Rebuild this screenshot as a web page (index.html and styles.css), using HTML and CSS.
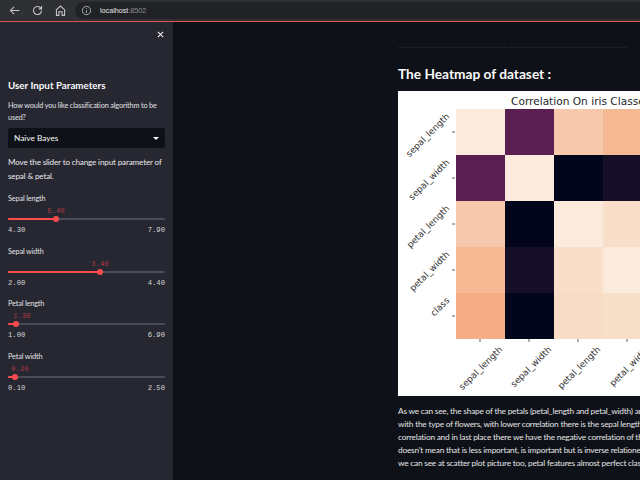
FILE: index.html
```html
<!DOCTYPE html>
<html lang="en">
<head>
    <meta charset="UTF-8">
    <meta name="viewport" content="width=device-width, initial-scale=1.0">
    <title>Iris Classification</title>
    <link rel="stylesheet" href="styles.css">
</head>
<body>

<!-- Browser toolbar -->
<header class="toolbar">
    <svg class="tool-icon" viewBox="0 0 16 16"><path d="M14 8H3M7.5 3.5 3 8l4.5 4.5"/></svg>
    <svg class="tool-icon" viewBox="0 0 16 16"><path d="M13 8a5 5 0 1 1-1.5-3.6L13 6M13 2.5V6H9.5"/></svg>
    <svg class="tool-icon" viewBox="0 0 16 16"><path d="M3 14V7l5-4.500L13 7v7h-3V9.500H6V14z"/></svg>
    <div class="address">
        <svg class="info-icon" viewBox="0 0 16 16"><circle cx="8" cy="8" r="6"/><path d="M8 7.500V11.500M8 4.500v1.200"/></svg>
        <span class="host">localhost</span><span class="port">:8502</span>
    </div>
</header>

<div class="app">
    <!-- Sidebar -->
    <aside class="sidebar">
        <div class="close-row">
            <svg class="close-icon" viewBox="0 0 8 8"><path d="M1 1l6 6M7 1 1 7"/></svg>
        </div>
        <h2 class="side-title">User Input Parameters</h2>
        <p class="side-label side-question">How would you like classification algorithm to be used?</p>
        <div class="select">
            <span>Naive Bayes</span>
            <span class="caret"></span>
        </div>
        <p class="side-text">Move the slider to change input parameter of sepal &amp; petal.</p>

        <div class="slider">
            <div class="side-label">Sepal length</div>
            <div class="track-wrap">
                <span class="value" style="left: 48px">5.40</span>
                <div class="track"><div class="fill" style="width: 48px"><span class="thumb"></span></div></div>
            </div>
            <div class="range"><span>4.30</span><span>7.90</span></div>
        </div>
        <div class="slider">
            <div class="side-label">Sepal width</div>
            <div class="track-wrap">
                <span class="value" style="left: 92px">3.40</span>
                <div class="track"><div class="fill" style="width: 92px"><span class="thumb"></span></div></div>
            </div>
            <div class="range"><span>2.00</span><span>4.40</span></div>
        </div>
        <div class="slider">
            <div class="side-label">Petal length</div>
            <div class="track-wrap">
                <span class="value" style="left: 14px">1.30</span>
                <div class="track"><div class="fill" style="width: 8px"><span class="thumb"></span></div></div>
            </div>
            <div class="range"><span>1.00</span><span>6.90</span></div>
        </div>
        <div class="slider">
            <div class="side-label">Petal width</div>
            <div class="track-wrap">
                <span class="value" style="left: 12px">0.20</span>
                <div class="track"><div class="fill" style="width: 7px"><span class="thumb"></span></div></div>
            </div>
            <div class="range"><span>0.10</span><span>2.50</span></div>
        </div>
    </aside>

    <!-- Main content -->
    <main class="main">
        <div class="table-edge">
            <span class="col col-a"></span><span class="col col-b"></span><span class="col col-c"></span><span class="col col-c"></span><span class="col col-e"></span><span class="col col-d"></span>
        </div>
        <h2 class="heading">The Heatmap of dataset :</h2>
        <figure class="plot">
            <svg class="heatmap" width="242" height="305" viewBox="0 0 242 305">
                <text class="plot-title" x="113" y="14">Correlation On iris Classes</text>

                <rect x="58" y="18" width="49" height="46" fill="#faebdd"/>
                <rect x="107" y="18" width="49" height="46" fill="#5a1f50"/>
                <rect x="156" y="18" width="49" height="46" fill="#f6c9ac"/>
                <rect x="205" y="18" width="49" height="46" fill="#f5b994"/>

                <rect x="58" y="64" width="49" height="46" fill="#5a1f50"/>
                <rect x="107" y="64" width="49" height="46" fill="#faebdd"/>
                <rect x="156" y="64" width="49" height="46" fill="#03051a"/>
                <rect x="205" y="64" width="49" height="46" fill="#160f28"/>

                <rect x="58" y="110" width="49" height="46" fill="#f6c9ac"/>
                <rect x="107" y="110" width="49" height="46" fill="#03051a"/>
                <rect x="156" y="110" width="49" height="46" fill="#faebdd"/>
                <rect x="205" y="110" width="49" height="46" fill="#f9dfc9"/>

                <rect x="58" y="156" width="49" height="46" fill="#f5b994"/>
                <rect x="107" y="156" width="49" height="46" fill="#160f28"/>
                <rect x="156" y="156" width="49" height="46" fill="#f9dfc9"/>
                <rect x="205" y="156" width="49" height="46" fill="#faebdd"/>

                <rect x="58" y="202" width="49" height="46" fill="#f4ad85"/>
                <rect x="107" y="202" width="49" height="46" fill="#03051a"/>
                <rect x="156" y="202" width="49" height="46" fill="#f8dcc5"/>
                <rect x="205" y="202" width="49" height="46" fill="#f8dfca"/>

                <g class="ticks">
                    <path d="M54 41h3M54 87h3M54 133h3M54 179h3M54 225h3"/>
                    <path d="M82 248v3M131 248v3M180 248v3M229 248v3"/>
                </g>

                <g class="tick-label">
                    <text transform="translate(52 26) rotate(-45)">sepal_length</text>
                    <text transform="translate(52 72) rotate(-45)">sepal_width</text>
                    <text transform="translate(52 118) rotate(-45)">petal_length</text>
                    <text transform="translate(52 164) rotate(-45)">petal_width</text>
                    <text transform="translate(52 210) rotate(-45)">class</text>
                    <text transform="translate(105 259) rotate(-45)">sepal_length</text>
                    <text transform="translate(154 259) rotate(-45)">sepal_width</text>
                    <text transform="translate(203 259) rotate(-45)">petal_length</text>
                    <text transform="translate(252 259) rotate(-45)">petal_width</text>
                </g>
            </svg>
        </figure>
        <div class="notes">
            <p>As we can see, the shape of the petals (petal_length and petal_width) are the most correlated</p>
            <p>with the type of flowers, with lower correlation there is the sepal length with a good</p>
            <p>correlation and in last place there we have the negative correlation of the sepal width, this</p>
            <p>doesn't mean that is less important, is important but is inverse relationed with the class, as</p>
            <p>we can see at scatter plot picture too, petal features almost perfect classify the flowers</p>
        </div>
    </main>
</div>

</body>
</html>
```

FILE: styles.css
```css
* {
    box-sizing: border-box;
}
html, body {
    height: 100%;
}
body {
    margin: 0;
    display: flex;
    flex-direction: column;
    overflow: hidden;
    font-family: "Lato", "Open Sans", sans-serif;
    background-color: #0e1117;
    color: #fafafa;
}

/* browser bar */
.toolbar {
    height: 22px;
    flex: none;
    display: flex;
    align-items: center;
    gap: 10px;
    padding: 0 0 0 8px;
    background-color: #2f3033;
    border-bottom: 1px solid #d9574c;
}
.tool-icon {
    width: 13px;
    height: 13px;
    fill: none;
    stroke: #c4c5c7;
    stroke-width: 1.300;
}
.address {
    flex: 1;
    height: 17px;
    margin-left: -2px;
    display: flex;
    align-items: center;
    padding-left: 6px;
    border-radius: 9px 0 0 9px;
    background-color: #212225;
    font-size: 7.200px;
    font-family: "Liberation Sans", sans-serif;
}
.info-icon {
    width: 11px;
    height: 11px;
    margin-right: 8px;
    fill: none;
    stroke: #c4c5c7;
    stroke-width: 1.200;
}
.host {
    color: #e6e6e6;
}
.port {
    color: #8e9094;
}

/* sidebar */
.app {
    flex: 1;
    display: flex;
    min-height: 0;
}
.sidebar {
    width: 173px;
    flex: none;
    padding: 0 8px;
    background-color: #262730;
}
.close-row {
    height: 57px;
    padding-top: 9px;
    display: flex;
    justify-content: flex-end;
}
.close-icon {
    width: 7px;
    height: 7px;
    margin-right: 1px;
    fill: none;
    stroke: #f0f0f0;
    stroke-width: 1.200;
}
.side-title {
    margin: 0 0 9px;
    font-size: 9.800px;
    line-height: 13px;
    font-weight: 700;
}
.side-label {
    margin: 0;
    font-size: 7.300px;
    line-height: 11px;
    letter-spacing: -0.150px;
    color: #e2e2e6;
}
.side-question {
    line-height: 12px;
    margin-top: -1px;
}
.select {
    height: 20px;
    margin-top: 4px;
    padding: 0 6px;
    display: flex;
    align-items: center;
    justify-content: space-between;
    border-radius: 2px;
    background-color: #0e1117;
    font-size: 8.300px;
}
.caret {
    width: 0;
    height: 0;
    border-left: 3px solid transparent;
    border-right: 3px solid transparent;
    border-top: 3px solid #fafafa;
}
.side-text {
    margin: 8px 0 10px;
    font-size: 8.100px;
    line-height: 13.500px;
    letter-spacing: -0.150px;
    color: #e8e8ea;
}

/* sliders */
.slider {
    height: 52.700px;
}
.track-wrap {
    position: relative;
    height: 20px;
    display: flex;
    align-items: flex-end;
    padding-bottom: 4px;
}
.value {
    position: absolute;
    top: 3px;
    transform: translateX(-50%);
    font-family: "Liberation Mono", monospace;
    font-size: 7.200px;
    line-height: 9px;
    color: #b03a45;
}
.track {
    width: 100%;
    height: 2px;
    background-color: #4b4c55;
    border-radius: 1px;
}
.fill {
    position: relative;
    height: 100%;
    background-color: #ff4b4b;
    border-radius: 1px;
}
.thumb {
    position: absolute;
    right: -3px;
    top: -2px;
    width: 6px;
    height: 6px;
    border-radius: 50%;
    background-color: #ff4b4b;
}
.range {
    display: flex;
    justify-content: space-between;
    margin-top: 1px;
    font-family: "Liberation Mono", monospace;
    font-size: 7.200px;
    line-height: 10px;
    color: #d6d6da;
}

/* main area */
.main {
    flex: 1;
    min-width: 0;
    overflow: hidden;
    padding: 0 0 0 225px;
}
.table-edge {
    height: 26px;
    width: 229px;
    display: flex;
    align-items: flex-end;
}
.col {
    height: 3px;
    border-bottom: 1px solid #1c1f26;
    border-right: 1px solid #1c1f26;
}
.col-a { width: 20px; }
.col-b { width: 48px; }
.col-c { width: 46px; }
.col-e { width: 45px; }
.col-d { width: 24px; }
.heading {
    margin: 17px 0 0;
    font-size: 13.700px;
    line-height: 18px;
    font-weight: 700;
    white-space: nowrap;
}
.plot {
    margin: 8px 0 0;
    width: 242px;
    height: 305px;
    background-color: #fff;
}
.heatmap {
    display: block;
    overflow: hidden;
}
.plot-title {
    font-family: "DejaVu Sans", sans-serif;
    font-size: 10.600px;
    fill: #262626;
}
.tick-label text {
    font-family: "DejaVu Sans", sans-serif;
    font-size: 9px;
    fill: #333;
    text-anchor: end;
}
.ticks path {
    fill: none;
    stroke: #333;
    stroke-width: 0.800;
}
.notes {
    margin-top: 9px;
    font-size: 8.300px;
    line-height: 13.100px;
    letter-spacing: -0.215px;
    color: #e4e4e6;
    white-space: nowrap;
}
.notes p {
    margin: 0;
}
```
